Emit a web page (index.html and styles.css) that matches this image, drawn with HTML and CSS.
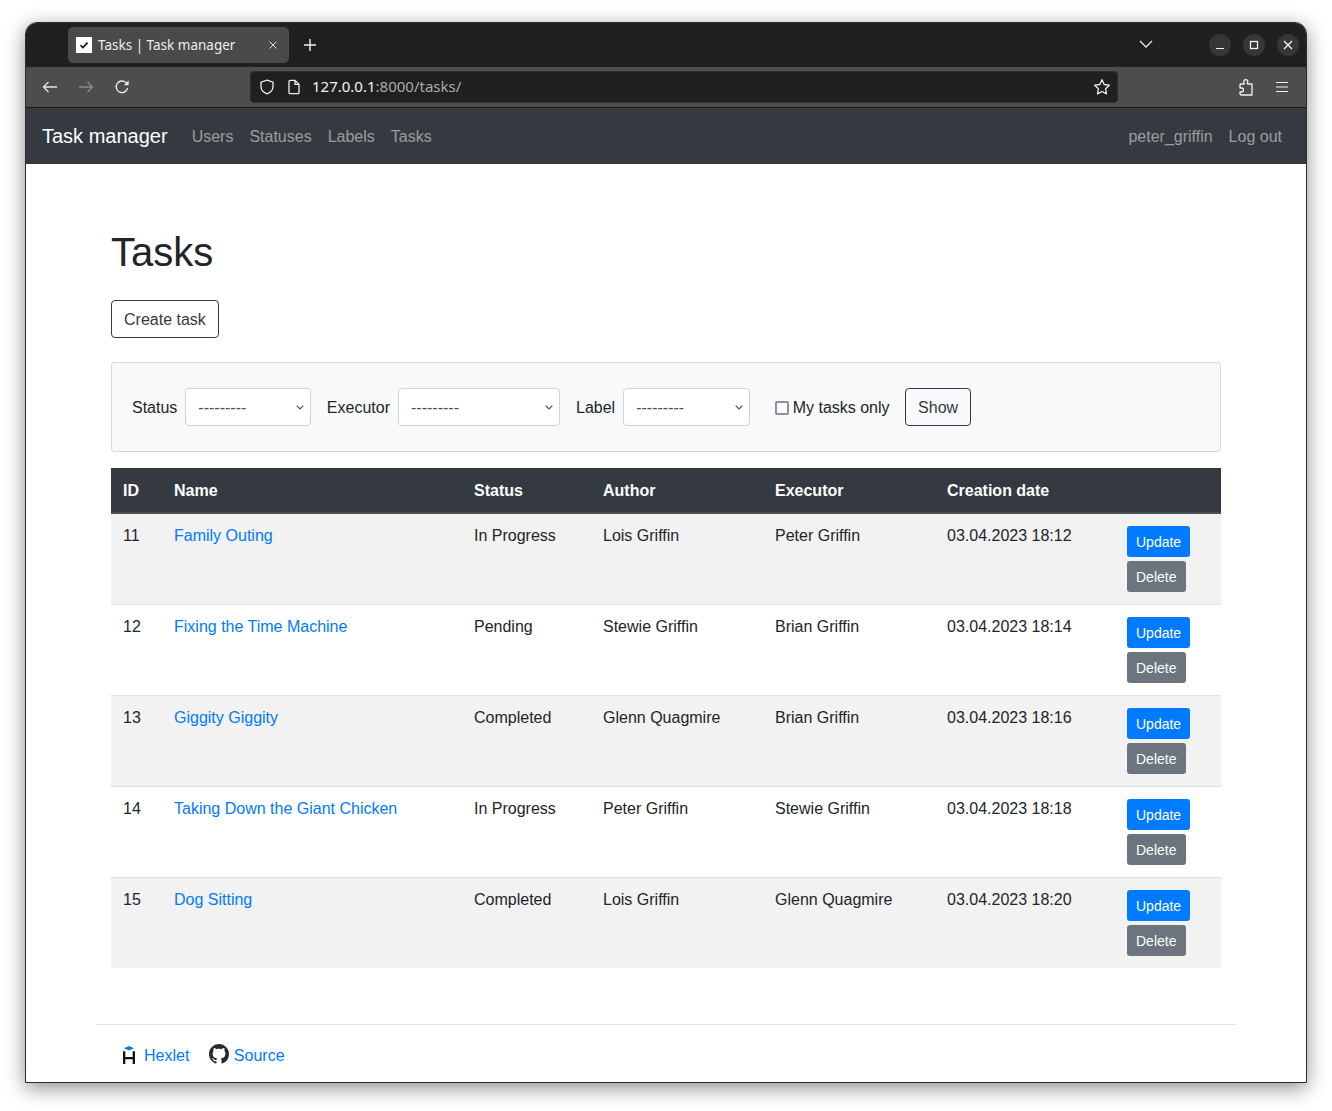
FILE: index.html
```html
<!DOCTYPE html>
<html lang="en">
<head>
  <meta charset="UTF-8" />
  <meta name="viewport" content="width=device-width, initial-scale=1.0"/>
  <title>Tasks | Task manager</title>
  <link rel="stylesheet" href="styles.css">
</head>
<body>
  <div class="window">
    <!-- browser chrome -->
    <div class="tabbar">
      <div class="tab">
        <span class="favicon">
          <svg width="16" height="16" viewBox="0 0 16 16"><path d="M4.5 8.2l2.4 2.4 4.6-5" fill="none" stroke="#111" stroke-width="1.6"/></svg>
        </span>
        <span class="tab-title">Tasks | Task manager</span>
        <svg class="tab-close" width="8" height="8" viewBox="0 0 8 8"><path d="M.5.5l7 7M7.500.5l-7 7" stroke="#ddd" stroke-width="1"/></svg>
      </div>
      <svg class="new-tab" width="12" height="12" viewBox="0 0 12 12"><path d="M6 0v12M0 6h12" stroke="#eee" stroke-width="1.4"/></svg>
      <svg class="tab-list" width="14" height="8" viewBox="0 0 14 8"><path d="M1 1l6 6 6-6" fill="none" stroke="#e8e8e8" stroke-width="1.3"/></svg>
      <div class="win-controls">
        <span class="win-btn"><svg width="10" height="10" viewBox="0 0 10 10"><path d="M1 8.5h8" stroke="#eee" stroke-width="1.2"/></svg></span>
        <span class="win-btn"><svg width="10" height="10" viewBox="0 0 10 10"><rect x="1.5" y="1.5" width="7" height="7" fill="none" stroke="#eee" stroke-width="1.3"/></svg></span>
        <span class="win-btn"><svg width="10" height="10" viewBox="0 0 10 10"><path d="M1 1l8 8M9 1l-8 8" stroke="#eee" stroke-width="1.4"/></svg></span>
      </div>
    </div>
    <div class="toolbar">
      <svg class="tool-icon" width="16" height="16" viewBox="0 0 16 16"><path d="M15 8H1.500M6.500 3l-5 5 5 5" fill="none" stroke="#e8e8e8" stroke-width="1.3"/></svg>
      <svg class="tool-icon" width="16" height="16" viewBox="0 0 16 16"><path d="M1 8h13.500M9.500 3l5 5-5 5" fill="none" stroke="#8a8a8a" stroke-width="1.3"/></svg>
      <svg class="tool-icon" width="16" height="16" viewBox="0 0 16 16"><path d="M13.600 9.200A5.800 5.800 0 1 1 12 3.600L14 5.600" fill="none" stroke="#e8e8e8" stroke-width="1.4"/><path d="M14.600 1.400v4.800H9.800z" fill="#e8e8e8"/></svg>
      <div class="urlbar">
        <svg class="shield" width="16" height="16" viewBox="0 0 16 16"><path d="M8 1.200l6 2v4.300c0 3.500-2.600 6-6 7.300-3.400-1.300-6-3.800-6-7.300V3.200z" fill="none" stroke="#eee" stroke-width="1.3"/></svg>
        <svg class="doc" width="14" height="16" viewBox="0 0 14 16"><path d="M2 2.500A1.200 1.200 0 0 1 3.200 1.300H8l4 4v8.200a1.200 1.200 0 0 1-1.200 1.200H3.200A1.200 1.200 0 0 1 2 13.500zM8 1.300v4h4" fill="none" stroke="#eee" stroke-width="1.3"/></svg>
        <span class="url"><span class="url-host">127.0.0.1</span>:8000/tasks/</span>
        <svg width="18" height="18" viewBox="0 0 18 18"><path d="M9 1.800l2.200 4.700 5.100.7-3.700 3.600.9 5.100L9 13.500l-4.500 2.400.9-5.100-3.700-3.600 5.100-.7z" fill="none" stroke="#eee" stroke-width="1.3" stroke-linejoin="round"/></svg>
      </div>
      <svg class="puzzle" width="16" height="18" viewBox="0 0 16 18"><path d="M3 6h2.500c.8 0 1-.6.600-1.200-.7-1-.6-1.800 0-2.500.8-.9 2.500-.9 3.300 0 .6.700.7 1.500 0 2.500-.4.600-.2 1.200.6 1.200H14v11H3.500a1.500 1.500 0 0 1-1.500-1.500V14h1.500c2.600 0 2.600-4 0-4H2V7a1 1 0 0 1 1-1z" fill="none" stroke="#eee" stroke-width="1.3" stroke-linejoin="round"/></svg>
      <svg class="menu" width="12" height="12" viewBox="0 0 12 12"><path d="M0 1.500h12M0 6h12M0 10.500h12" stroke="#eee" stroke-width="1.200"/></svg>
    </div>

    <!-- page -->
    <nav class="navbar">
      <a class="brand" href="#">Task manager</a>
      <ul class="nav-list">
        <li><a class="nav-link" href="#">Users</a></li>
        <li><a class="nav-link" href="#">Statuses</a></li>
        <li><a class="nav-link" href="#">Labels</a></li>
        <li><a class="nav-link" href="#">Tasks</a></li>
      </ul>
      <ul class="nav-list nav-right">
        <li><a class="nav-link" href="#">peter_griffin</a></li>
        <li><a class="nav-link" href="#">Log out</a></li>
      </ul>
    </nav>

    <div class="container">
      <main class="content">
        <h1>Tasks</h1>
        <a class="btn" href="#">Create task</a>

        <form class="filter">
          <label class="filter-label" for="status">Status</label>
          <select class="filter-select select-status" id="status"><option>---------</option></select>
          <label class="filter-label" for="executor">Executor</label>
          <select class="filter-select select-executor" id="executor"><option>---------</option></select>
          <label class="filter-label" for="label">Label</label>
          <select class="filter-select select-label" id="label"><option>---------</option></select>
          <label class="filter-check"><input type="checkbox" /> My tasks only</label>
          <button class="btn" type="submit">Show</button>
        </form>

        <table class="tasks">
          <thead>
            <tr>
              <th class="col-id">ID</th>
              <th class="col-name">Name</th>
              <th class="col-status">Status</th>
              <th class="col-author">Author</th>
              <th class="col-executor">Executor</th>
              <th class="col-date">Creation date</th>
              <th class="col-actions"></th>
            </tr>
          </thead>
          <tbody>
            <tr>
              <td>11</td>
              <td><a href="#">Family Outing</a></td>
              <td>In Progress</td>
              <td>Lois Griffin</td>
              <td>Peter Griffin</td>
              <td>03.04.2023 18:12</td>
              <td class="actions"><div class="action-stack"><a class="btn-sm btn-update" href="#">Update</a><a class="btn-sm btn-delete" href="#">Delete</a></div></td>
            </tr>
            <tr>
              <td>12</td>
              <td><a href="#">Fixing the Time Machine</a></td>
              <td>Pending</td>
              <td>Stewie Griffin</td>
              <td>Brian Griffin</td>
              <td>03.04.2023 18:14</td>
              <td class="actions"><div class="action-stack"><a class="btn-sm btn-update" href="#">Update</a><a class="btn-sm btn-delete" href="#">Delete</a></div></td>
            </tr>
            <tr>
              <td>13</td>
              <td><a href="#">Giggity Giggity</a></td>
              <td>Completed</td>
              <td>Glenn Quagmire</td>
              <td>Brian Griffin</td>
              <td>03.04.2023 18:16</td>
              <td class="actions"><div class="action-stack"><a class="btn-sm btn-update" href="#">Update</a><a class="btn-sm btn-delete" href="#">Delete</a></div></td>
            </tr>
            <tr>
              <td>14</td>
              <td><a href="#">Taking Down the Giant Chicken</a></td>
              <td>In Progress</td>
              <td>Peter Griffin</td>
              <td>Stewie Griffin</td>
              <td>03.04.2023 18:18</td>
              <td class="actions"><div class="action-stack"><a class="btn-sm btn-update" href="#">Update</a><a class="btn-sm btn-delete" href="#">Delete</a></div></td>
            </tr>
            <tr>
              <td>15</td>
              <td><a href="#">Dog Sitting</a></td>
              <td>Completed</td>
              <td>Lois Griffin</td>
              <td>Glenn Quagmire</td>
              <td>03.04.2023 18:20</td>
              <td class="actions"><div class="action-stack"><a class="btn-sm btn-update" href="#">Update</a><a class="btn-sm btn-delete" href="#">Delete</a></div></td>
            </tr>
          </tbody>
        </table>
      </main>

      <footer class="footer">
        <a class="footer-link" href="#">
          <svg class="hexlet" width="12" height="18" viewBox="0 0 12 18">
            <path d="M1 2.200L6 0l5 2.200L6 4.400z" fill="#0a7bd8"/>
            <path d="M0 5.200h2.300V18H0zM9.700 5.200H12V18H9.700zM2 11h8v2.200H2z" fill="#111"/>
          </svg>
          Hexlet
        </a>
        <a class="footer-link" href="#">
          <svg class="github" width="20" height="20" viewBox="0 0 16 16"><path fill="#24292e" d="M8 0C3.580 0 0 3.580 0 8c0 3.540 2.290 6.530 5.470 7.590.4.070.55-.17.55-.38 0-.19-.01-.82-.01-1.490-2.010.37-2.530-.49-2.690-.94-.09-.23-.48-.94-.82-1.130-.28-.15-.68-.52-.01-.53.63-.01 1.080.58 1.230.82.72 1.210 1.870.87 2.330.66.07-.52.28-.87.51-1.070-1.780-.2-3.640-.89-3.640-3.950 0-.87.31-1.590.82-2.150-.08-.2-.36-1.020.08-2.120 0 0 .67-.21 2.200.82.64-.18 1.320-.27 2-.27.68 0 1.360.09 2 .27 1.530-1.040 2.200-.82 2.200-.82.44 1.100.16 1.920.08 2.120.51.56.82 1.270.82 2.150 0 3.070-1.870 3.750-3.650 3.950.29.25.54.73.54 1.480 0 1.070-.01 1.930-.01 2.200 0 .21.15.46.55.38A8.013 8.013 0 0016 8c0-4.420-3.580-8-8-8z"/></svg>
          Source
        </a>
      </footer>
    </div>
  </div>
</body>
</html>
```

FILE: styles.css
```css
* {
  box-sizing: border-box;
}

body {
  margin: 0;
  padding: 22px 25px 28px;
  background: #fff;
  color: #212529;
  font-family: "Liberation Sans", Arial, sans-serif;
  font-size: 16px;
  line-height: 1.5;
}

a {
  color: #007bff;
  text-decoration: none;
}

/* browser window */
.window {
  width: 1282px;
  height: 1061px;
  background: #fff;
  border: 1px solid #2c2c2c;
  border-radius: 12px 12px 0 0;
  box-shadow: 0 5px 20px rgba(0, 0, 0, 0.45);
  overflow: hidden;
}

.tabbar {
  display: flex;
  align-items: center;
  height: 44px;
  padding-left: 42px;
  background: #202020;
}

.tab {
  display: flex;
  align-items: center;
  width: 221px;
  height: 36px;
  padding: 0 12px 0 8px;
  background: #4a4a4a;
  border-radius: 5px;
  color: #eee;
  font-family: "Noto Sans", sans-serif;
  font-size: 13.5px;
}

.favicon {
  display: flex;
  width: 16px;
  height: 16px;
  margin-right: 6px;
  background: #fff;
}

.tab-title {
  flex: 1;
  white-space: nowrap;
}

.new-tab {
  margin-left: 15px;
}

.tab-list {
  margin-left: 823px;
  margin-top: -2px;
}

.win-controls {
  display: flex;
  gap: 12px;
  margin-left: 56px;
}

.win-btn {
  display: flex;
  align-items: center;
  justify-content: center;
  width: 22px;
  height: 22px;
  border-radius: 50%;
  background: #373737;
}

.toolbar {
  display: flex;
  align-items: center;
  height: 41px;
  padding: 0 16px 1px 16px;
  background: #4d4d4d;
  border-bottom: 1px solid #1c1c1c;
}

.tool-icon {
  margin-right: 20px;
}

.urlbar {
  display: flex;
  align-items: center;
  width: 868px;
  height: 32px;
  margin-left: 100px;
  padding: 0 6px 0 8px;
  background: #202020;
  border: 1px solid #2e2e2e;
  border-radius: 4px;
  color: #aaa;
  font-family: "Noto Sans", sans-serif;
  font-size: 15px;
}

.doc {
  margin-left: 12px;
}

.url {
  flex: 1;
  margin-left: 11px;
}

.url-host {
  color: #f2f2f2;
}

.puzzle {
  margin-left: 120px;
}

.menu {
  margin-left: 22px;
}

/* site navbar */
.navbar {
  display: flex;
  align-items: center;
  height: 56px;
  padding: 0 16px;
  background: #343a40;
}

.brand {
  margin-right: 16px;
  color: #fff;
  font-size: 20px;
}

.nav-list {
  display: flex;
  margin: 0;
  padding: 0;
  list-style: none;
}

.nav-right {
  margin-left: auto;
}

.nav-link {
  display: block;
  padding: 9px 8px 7px;
  color: rgba(255, 255, 255, 0.5);
}

.container {
  width: 1140px;
  margin: 0 auto;
}

.content {
  padding: 64px 15px 0;
}

h1 {
  margin: 0 0 24px;
  font-size: 40px;
  font-weight: 500;
  line-height: 1.2;
}

.btn {
  display: inline-block;
  padding: 7px 12px 5px;
  background: transparent;
  border: 1px solid #343a40;
  border-radius: 4px;
  color: #343a40;
  font-family: inherit;
  font-size: 16px;
  line-height: 24px;
}

/* filter form */
.filter {
  display: flex;
  align-items: center;
  height: 90px;
  margin: 24px 0 16px;
  padding: 0 20px;
  background: #f8f9fa;
  border: 1px solid rgba(0, 0, 0, 0.125);
  border-radius: 4px;
}

.filter-label {
  margin-right: 8px;
  padding-top: 2px;
}

.filter-select {
  height: 38px;
  margin-right: 16px;
  padding: 6px 12px;
  background: #fff url("data:image/svg+xml,%3Csvg xmlns='http://www.w3.org/2000/svg' width='8' height='5' viewBox='0 0 8 5'%3E%3Cpath d='M.7.7L4 4l3.300-3.300' fill='none' stroke='%23495057' stroke-width='1.2'/%3E%3C/svg%3E") no-repeat right 6px center;
  border: 1px solid #ced4da;
  border-radius: 4px;
  color: #495057;
  font-family: inherit;
  font-size: 16px;
  appearance: none;
}

.select-status {
  width: 125.5px;
}

.select-executor {
  width: 162px;
}

.select-label {
  width: 127px;
  margin-right: 24.5px;
}

.filter-check {
  display: flex;
  align-items: center;
  gap: 4px;
  margin-right: 15.5px;
  padding-top: 2px;
}

.filter-check input {
  width: 14px;
  height: 14px;
  margin: 0;
  background: #fff;
  border: 2px solid #8f8f9d;
  border-radius: 2px;
  appearance: none;
}

/* tasks table */
.tasks {
  width: 1110px;
  border-collapse: collapse;
  table-layout: fixed;
}

.tasks th {
  padding: 11px 12px 9px;
  background: #343a40;
  border-bottom: 2px solid #454d55;
  color: #fff;
  font-weight: 700;
  text-align: left;
}

.col-id { width: 51px; }
.col-name { width: 300px; }
.col-status { width: 129px; }
.col-author { width: 172px; }
.col-executor { width: 172px; }
.col-date { width: 180px; }
.col-actions { width: 106px; }

.tasks td {
  padding: 10px 12px 12px;
  border-top: 1px solid #dee2e6;
  vertical-align: top;
}

.tasks tbody tr:nth-child(odd) {
  background: #f2f2f2;
}

.tasks td.actions {
  padding-top: 12px;
}

.action-stack {
  display: flex;
  flex-direction: column;
  align-items: flex-start;
  gap: 4px;
}

.btn-sm {
  padding: 6px 9px 4px;
  border-radius: 3px;
  color: #fff;
  font-size: 14px;
  line-height: 21px;
}

.btn-update {
  background: #007bff;
}

.btn-delete {
  min-width: 59px;
  background: #6c757d;
}

/* footer */
.footer {
  display: flex;
  align-items: center;
  gap: 20px;
  height: 58px;
  margin-top: 56px;
  padding: 5px 0 0 27px;
  border-top: 1px solid #dee2e6;
}

.footer-link {
  display: flex;
  align-items: center;
}

.hexlet {
  margin: 0 9px 2px 0;
}

.github {
  margin: 0 4.5px 4px 0;
}
```
